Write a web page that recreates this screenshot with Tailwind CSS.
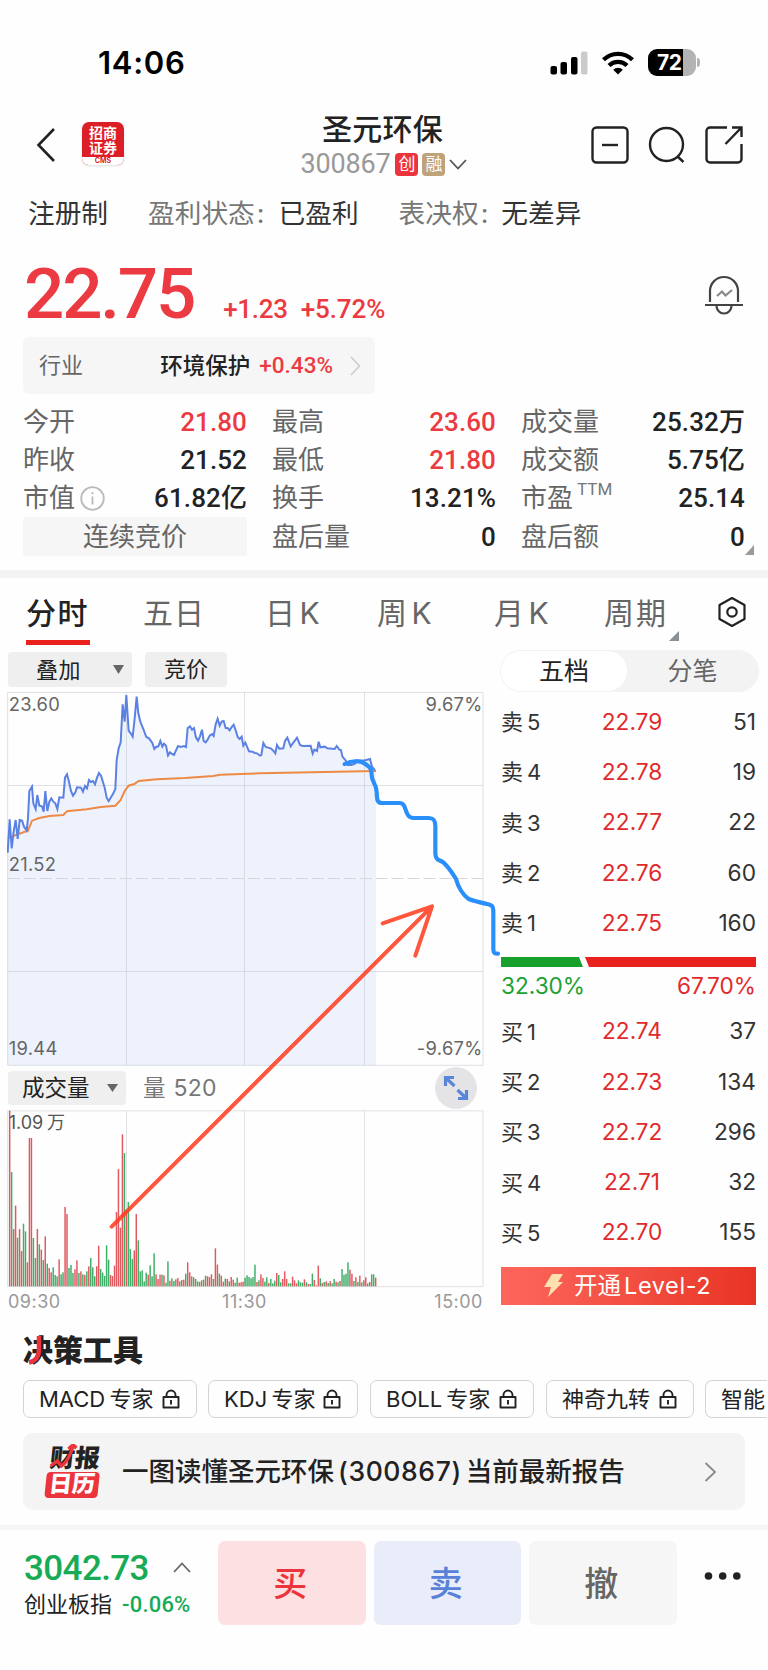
<!DOCTYPE html>
<html lang="zh-CN">
<head>
    <meta charset="UTF-8" />
    <meta name="viewport" content="width=device-width, initial-scale=1.0"/>
    <title>圣元环保 300867</title>
    <script src="https://cdn.jsdelivr.net/npm/@tailwindcss/browser@4"></script>
</head>
<body class="w-[768px] h-[1670px] overflow-hidden bg-[#fefefe] text-[#222] font-['Inter','Noto_Sans_CJK_SC',sans-serif] whitespace-nowrap">

<!-- Status bar -->
<div class="h-[100px] pt-[25px] pl-[98px] pr-[68px] flex items-center justify-between text-black">
    <span class="text-[31px] font-semibold leading-none tracking-[0.7px]">14:06</span>
    <div class="flex items-center gap-[14px]">
        <svg class="w-[38px] h-[24px]" viewBox="0 0 38 24">
            <rect x="0.5" y="15" width="6.5" height="8.5" rx="2"/>
            <rect x="10.5" y="11" width="6.5" height="12.5" rx="2"/>
            <rect x="21" y="6" width="6.5" height="17.5" rx="2"/>
            <rect x="31" y="0.5" width="6.5" height="23" rx="2" fill="#cbcbcb"/>
        </svg>
        <svg class="w-[32px] h-[24px]" viewBox="0 0 32 24" fill="none" stroke="#000" stroke-width="4.2">
            <path d="M1.5 8.8a20.6 20.6 0 0 1 29 0"/>
            <path d="M7 14.5a12.8 12.8 0 0 1 18 0"/>
            <path d="M16 23.5l-4.8-4.8a6.8 6.8 0 0 1 9.6 0z" fill="#000" stroke="none"/>
        </svg>
        <div class="flex items-center gap-[1px]">
            <div class="w-[48px] h-[27px] rounded-[9px] bg-linear-to-r from-black from-72% to-[#b3b3b3] to-72% text-white text-[21px] font-bold leading-[27px] pl-[9px] tracking-[-0.5px]">72</div>
            <div class="w-[3px] h-[9px] rounded-r-full bg-[#b3b3b3]"></div>
        </div>
    </div>
</div>

<!-- Title bar -->
<header class="h-[90px] px-[25px] grid grid-cols-[250px_1fr_250px] items-center">
    <div class="flex items-center pl-[11px]">
        <svg class="w-[20px] h-[36px]" viewBox="0 0 20 36" fill="none" stroke="#222" stroke-width="2.6"><path d="M18 2L2.5 18 18 34"/></svg>
        <div class="ml-[26px] mb-[4px] w-[42px] h-[43px] rounded-[7px] bg-[#dc1f26] overflow-hidden shadow-sm flex flex-col text-white text-[14px] font-bold leading-[15px] text-center">
            <span class="pt-[3px]">招商</span>
            <span>证券</span>
            <span class="mt-auto h-[8px] bg-white text-[#dc1f26] text-[7px] leading-[7px]">CMS</span>
        </div>
    </div>
    <div class="text-center">
        <h1 class="text-[30px] leading-[32px] font-medium mt-[3px] ml-[-3px] tracking-[0.2px]">圣元环保</h1>
        <div class="flex items-center justify-center h-[32px] mt-[4px] text-[#999]">
            <span class="text-[27px] font-['Roboto'] tracking-[-0.2px]">300867</span>
            <span class="ml-[5px] w-[23px] h-[23px] rounded-[4px] bg-[#ec343d] text-white text-[17px] leading-[22px]">创</span>
            <span class="ml-[4px] w-[23px] h-[23px] rounded-[4px] bg-[#bfa27a] text-white text-[17px] leading-[22px]">融</span>
            <svg class="ml-[4px] w-[18px] h-[11px]" viewBox="0 0 18 11" fill="none" stroke="#555" stroke-width="1.8"><path d="M1 1l8 8.5L17 1"/></svg>
        </div>
    </div>
    <div class="flex items-center justify-end gap-[19px]">
        <svg class="w-[38px] h-[38px]" viewBox="0 0 38 38" fill="none" stroke="#222" stroke-width="2.4"><rect x="1.5" y="1.5" width="35" height="35" rx="4"/><path d="M11 19h16"/></svg>
        <svg class="w-[38px] h-[38px]" viewBox="0 0 38 38" fill="none" stroke="#222" stroke-width="2.4"><circle cx="18.5" cy="18.5" r="16.5"/><path d="M29.5 30.5l6 5.5"/></svg>
        <svg class="w-[38px] h-[38px]" viewBox="0 0 38 38" fill="none" stroke="#222" stroke-width="2.4"><path d="M22 1.5H5A3.5 3.5 0 0 0 1.5 5v28A3.5 3.5 0 0 0 5 36.500h28a3.500 3.500 0 0 0 3.500-3.500V18M27 1.500h9.500V11M36 2L20.500 18"/></svg>
    </div>
</header>

<!-- Listing info -->
<div class="h-[46px] pl-[28px] flex items-center text-[26.7px] leading-none text-[#333]">
    <span>注册制</span>
    <span class="ml-[40px] text-[#777]">盈利状态<span class="ml-[2px]">:</span></span><span class="ml-[14px]">已盈利</span>
    <span class="ml-[40px] text-[#777]">表决权<span class="ml-[2px]">:</span></span><span class="ml-[13px]">无差异</span>
</div>

<!-- Price -->
<div class="h-[101px] px-[24px] flex items-start justify-between">
    <div class="flex items-baseline font-['Roboto'] text-[#ec3a42] pt-[18px]">
        <span class="text-[71px] leading-[80px] font-medium tracking-[-2.2px]">22.75</span>
        <span class="ml-[29px] text-[26px] font-medium tracking-[-0.3px]">+1.23</span>
        <span class="ml-[13px] text-[26px] font-medium tracking-[-0.1px]">+5.72%</span>
    </div>
    <svg class="mt-[39px] mr-[0px] w-[40px] h-[40px]" viewBox="0 0 40 40" fill="none" stroke="#444" stroke-width="2.2">
        <path d="M6 27V16a14 14 0 0 1 28 0v11M1 30h38M12.500 31a7.500 7.500 0 0 0 15 0"/>
        <path d="M13 21l5-4.500 3.500 4L28 15" stroke="#888"/>
    </svg>
</div>

<div class="ml-[23px] w-[352px] h-[57px] rounded-[6px] bg-[#f6f6f6] flex items-center pl-[16px] pr-[14px]">
    <span class="text-[22px] text-[#666]">行业</span>
    <span class="ml-auto text-[22.5px] font-medium">环境保护</span>
    <span class="ml-[9px] text-[22.500px] text-[#ec3a42] font-['Roboto'] font-medium">+0.43%</span>
    <svg class="ml-[17px] w-[11px] h-[20px]" viewBox="0 0 11 20" fill="none" stroke="#ccc" stroke-width="1.6"><path d="M1 1l8.500 9L1 19"/></svg>
</div>

<!-- Quote table -->
<div class="relative h-[176px] pt-[8.5px] px-[23px]">
    <div id="stats" class="grid grid-cols-[224px_224px_224px] gap-x-[25px] auto-rows-[38.300px] text-[26px] leading-none"></div>
    <svg class="absolute left-[745px] top-[151px] w-[9px] h-[10px]" viewBox="0 0 9 10"><path d="M9 0v10H0z" fill="#999"/></svg>
</div>

<div class="h-[8px] bg-[#f3f3f3]"></div>

<!-- Period tabs -->
<nav class="h-[67px] pl-[26px] grid grid-cols-[117px_122px_112px_117px_110px_113px_30px] text-[30px] leading-[70px] text-[#666] [word-spacing:-4px]">
    <span class="w-[64px] h-[67px] border-b-[5px] border-[#e8211c] text-[#222] font-medium tracking-[1.500px]">分时</span>
    <span class="tracking-[1px]">五日</span>
    <span>日 K</span>
    <span>周 K</span>
    <span>月 K</span>
    <span class="relative tracking-[2px]">周期
        <svg class="absolute left-[65px] top-[53px] w-[10px] h-[10px]" viewBox="0 0 10 10"><path d="M10 0v10H0z" fill="#8a9095"/></svg>
    </span>
    <svg class="mt-[18px] w-[30px] h-[32px]" viewBox="0 0 30 32" fill="none" stroke="#222" stroke-width="2.200"><path d="M15 2l12.500 7v14L15 30 2.500 23V9z" stroke-linejoin="round"/><circle cx="15" cy="16" r="4.700"/></svg>
</nav>

<main class="relative flex h-[667px]">
    <section class="w-[493px] pl-[7px] pt-[7px]">
        <div class="flex gap-[13px] text-[22px] text-[#222] leading-[34px]">
            <div class="ml-[1px] w-[124px] h-[35px] rounded-[4px] bg-[#efefef] flex items-center pl-[28px] tracking-[0.5px]">叠加
                <svg class="ml-[32px] w-[11px] h-[9px]" viewBox="0 0 11 9"><path d="M0 0h11L5.500 9z" fill="#666"/></svg>
            </div>
            <div class="w-[82px] h-[35px] rounded-[4px] bg-[#efefef] text-center">竞价</div>
        </div>
        <!-- Intraday chart -->
        <svg class="mt-[5px] w-[477px] h-[374px] block" viewBox="21 21 1431 1122" fill="none">
            <path id="area" fill="#eef2fd"/>
            <path d="M23 22.500H1449V1141H23zM379.500 22V1141M733.500 22V1141M1093.500 22V1141M23 301.500H1449M23 859.500H1449" stroke="#c4c8d0" stroke-opacity=".55" stroke-width="3"/>
            <path d="M23 580.500H1449" stroke="#d5d7dc" stroke-width="3" stroke-dasharray="36 12"/>
            <polyline points="23,460 47,450 84,437 96,407 118,399 148,393 190,390 201,379 260,373 303,366 346,362 362,345 374,318 386,302 403,297 416,288 470,283 555,279 640,273 660,269 780,265 1128,258" stroke="#ee8a45" stroke-width="6"/>
            <polyline id="price" stroke="#5b82e3" stroke-width="6" points="23,503 29,403 35,490 41,440 47,405 53,462 59,405 66,407 72,425 80,436 84,400 88,318 96,305 100,355 107,372 112,330 118,362 126,364 131,380 136,318 142,378 148,350 154,340 160,350 166,355 172,372 178,337 190,338 195,278 201,268 207,290 213,318 219,332 226,322 231,307 243,308 249,320 255,303 261,310 267,285 273,291 279,288 285,298 291,278 297,264 303,272 314,308 320,338 326,348 332,338 340,325 346,312 350,225 356,190 362,172 368,58 374,110 379,30 386,137 392,145 398,155 404,100 410,35 415,85 421,110 430,132 439,156 447,160 457,174 463,192 468,186 475,184 481,168 487,185 492,176 498,182 504,211 510,202 516,207 522,210 528,196 534,183 542,186 552,183 558,186 563,130 570,124 576,134 582,129 588,158 594,167 600,154 606,134 611,168 617,172 623,164 629,152 636,147 641,153 647,118 653,101 659,122 665,110 671,108 677,129 683,129 689,136 695,126 701,119 707,136 713,156 719,162 725,155 730,182 736,173 747,199 757,200 765,204 771,205 780,212 784,210 790,174 797,186 812,190 820,197 826,205 831,180 838,191 850,190 855,168 862,158 872,184 880,173 891,158 900,180 908,183 932,182 938,206 943,194 951,198 956,170 961,187 974,185 982,190 1004,192 1010,183 1018,194 1023,195 1027,214 1038,228 1042,240 1055,240 1065,236 1072,228 1095,226 1110,222 1116,245 1125,256"/>
            <g fill="#666" font-size="55" font-family="Inter" letter-spacing="1">
                <text x="26" y="77">23.60</text>
                <text x="26" y="558">21.52</text>
                <text x="26" y="1109">19.44</text>
                <text x="1448" y="77" text-anchor="end">9.67%</text>
                <text x="1448" y="1109" text-anchor="end">-9.67%</text>
            </g>
        </svg>
        <div class="h-[44px] flex items-center text-[22.500px] leading-none">
            <div class="ml-[1px] w-[118px] h-[34px] rounded-[4px] bg-[#efefef] flex items-center pl-[14px]">成交量
                <svg class="ml-[17px] w-[11px] h-[8px]" viewBox="0 0 11 8"><path d="M0 0h11L5.500 8z" fill="#666"/></svg>
            </div>
            <span class="ml-[17px] text-[#777]">量</span><span class="ml-[8px] text-[23px] text-[#777] tracking-[0.3px]">520</span>
            <div class="ml-auto mr-[16px] w-[42px] h-[42px] rounded-full bg-[#e4e4e6] flex items-center justify-center">
                <svg class="w-[26px] h-[26px]" viewBox="0 0 26 26" fill="none" stroke="#5b86d8" stroke-width="3.200"><path d="M2.500 11V2.500H11M3 3l8.500 8M23.500 15v8.500H15M23 23l-8.500-8"/></svg>
            </div>
        </div>
        <!-- Volume chart -->
        <svg class="w-[477px] h-[178px] block" viewBox="21 150 1431 534" fill="none">
            <path d="M23 152.500H1449V680H23zM379.500 152V680M733.500 152V680M1093.500 152V680" stroke="#e0e1e4" stroke-width="3"/>
            <g id="bars"></g>
            <text x="26" y="208" fill="#555" font-size="54" font-family="Inter, 'Noto Sans CJK SC'">1.09<tspan dx="11">万</tspan></text>
        </svg>
        <div class="w-[477px] pl-[1px] pr-[1px] h-[28px] flex justify-between text-[18px] leading-[27px] text-[#999] tracking-[0.5px]">
            <span>09:30</span><span class="ml-[-6px]">11:30</span><span>15:00</span>
        </div>
    </section>

    <!-- Order book -->
    <section class="w-[275px] pl-[8px] pr-[12px] pt-[5px]">
        <div class="ml-[-1px] mr-[-3px] h-[42px] rounded-full bg-[#f3f3f3] p-[1px] flex text-[25px] leading-[40px] text-center">
            <span class="w-[126px] rounded-full bg-white">五档</span>
            <span class="flex-1 text-[#666]">分笔</span>
        </div>
        <div id="asks" class="pt-[5px]"></div>
        <svg class="mt-[9px] w-[255px] h-[10px] block" viewBox="0 0 255 10"><path d="M0 0h78l4 10H0z" fill="#17a02b"/><path d="M84 0h171v10H88z" fill="#e8211f"/></svg>
        <div class="h-[38px] flex justify-between items-center text-[22.600px] leading-none">
            <span class="text-[#1ca133]">32.30%</span><span class="text-[#e12a2c]">67.70%</span>
        </div>
        <div id="bids" class="pt-px"></div>
        <button class="mt-[9px] w-[255px] h-[38px] flex items-center pl-[42px] bg-linear-to-r from-[#fd665c] to-[#e83323] text-white text-[23.500px] leading-none">
            <svg class="w-[21px] h-[23px]" viewBox="0 0 21 23"><path d="M9 0h11l-5 8h5L5 23l3-10H1z" fill="#ffe1b0"/></svg>
            <span class="ml-[10px]">开通<span class="ml-[3px] tracking-[0.600px]">Level-2</span></span>
        </button>
    </section>

    <!-- Hand-drawn marks -->
    <svg class="absolute left-0 top-[40px] w-[510px] h-[605px] pointer-events-none" viewBox="0 0 1530 1815" fill="none" stroke-linecap="round" stroke-linejoin="round">
        <path d="M1034 237C1056 226 1080 226 1094 236C1108 244 1115 250 1115 268C1114 294 1130 294 1130 322C1131 346 1132 354 1146 354H1200C1222 354 1212 399 1240 399H1286C1300 399 1306 404 1306 424V505C1306 528 1322 524 1332 534C1346 548 1356 562 1368 582C1374 606 1390 632 1406 642C1426 650 1448 654 1462 657C1476 661 1480 662 1480 682V790C1480 806 1484 806 1494 806" stroke="#2a8ffb" stroke-width="12.500"/>
        <path d="M335 1625L1296 664M1148 715L1296 664L1246 812" stroke="#ff3a1c" stroke-opacity=".85" stroke-width="12"/>
    </svg>
</main>

<!-- Tools -->
<section class="h-[213px] px-[23px] pt-[19px]">
    <h2 class="relative text-[30px] leading-[38px] font-black text-[#222]">决策工具
        <svg class="absolute left-[5px] top-[5px] w-[14px] h-[29px]" viewBox="0 0 14 29" fill="none" stroke="#ec343d" stroke-width="4.500"><path d="M11 0V13C11 20 8 25 1 26.500"/></svg>
    </h2>
    <div class="mt-[11px] flex text-[22px] leading-none [&>div]:h-[38px] [&>div]:shrink-0 [&>div]:rounded-[7px] [&>div]:border [&>div]:border-[#d4d4d4] [&>div]:flex [&>div]:items-center [&>div]:pl-[15px]">
        <div class="w-[174px]"><span class="w-[123px] [word-spacing:-2px]">MACD 专家</span><svg class="lock w-[18px] h-[20px]" viewBox="0 0 18 20"></svg></div>
        <div class="ml-[11px] w-[150px]"><span class="w-[99px] [word-spacing:-2px]">KDJ 专家</span><svg class="lock w-[18px] h-[20px]" viewBox="0 0 18 20"></svg></div>
        <div class="ml-[12px] w-[164px]"><span class="w-[113px] [word-spacing:-2px]">BOLL 专家</span><svg class="lock w-[18px] h-[20px]" viewBox="0 0 18 20"></svg></div>
        <div class="ml-[12px] w-[148px]"><span class="w-[97px]">神奇九转</span><svg class="lock w-[18px] h-[20px]" viewBox="0 0 18 20"></svg></div>
        <div class="ml-[11px] w-[62px] rounded-r-none! border-r-0!">智能</div>
    </div>
    <div class="mt-[15px] h-[77px] rounded-[10px] bg-[#f4f4f4] flex items-center pl-[24px] pr-[28px]">
        <div class="relative w-[53px] -skew-x-6 font-black text-center leading-none">
            <div class="text-[25px] leading-[26px]">财报</div>
            <div class="mt-[1px] h-[26px] rounded-[4px] bg-[#ec343d] text-white text-[23px] leading-[25px]">日历</div>
            <svg class="absolute left-[2px] top-[-1px] w-[26px] h-[25px]" viewBox="0 0 26 25" fill="none" stroke="#ec343d" stroke-width="3.500"><path d="M1 22l6-5 5 5C18 17 20 10 21 3M17 5l4-4 4 3"/></svg>
        </div>
        <span class="ml-[22px] text-[26.500px] font-medium [word-spacing:-3px]">一图读懂圣元环保 <span class="tracking-[0.600px]">(300867)</span> 当前最新报告</span>
        <svg class="ml-auto w-[13px] h-[20px]" viewBox="0 0 13 20" fill="none" stroke="#888" stroke-width="1.800"><path d="M1.500 1l9.500 9-9.500 9"/></svg>
    </div>
</section>

<div class="h-[5px] bg-[#f5f5f5]"></div>

<!-- Trade bar -->
<footer class="h-[140px] pt-[11px] pl-[24px] flex">
    <div class="w-[194px] pt-[7px]">
        <div class="flex h-[42px] items-center">
            <span class="w-[125px] text-[35px] text-[#17ab55] font-['Roboto'] font-medium tracking-[-0.600px]">3042.73</span>
            <svg class="ml-[24px] mb-[4px] w-[18px] h-[11px]" viewBox="0 0 18 11" fill="none" stroke="#666" stroke-width="1.800"><path d="M1 10l8-8.500L17 10"/></svg>
        </div>
        <div class="flex items-center h-[28px] text-[22px]">
            <span>创业板指</span>
            <span class="ml-[10px] text-[#17ab55] font-['Roboto'] font-medium tracking-[0.200px]">-0.06%</span>
        </div>
    </div>
    <div class="flex gap-[8px] text-[34px] font-medium text-center leading-[86px] [&>div]:pr-[3px]">
        <div class="w-[147.500px] h-[84px] rounded-[7px] bg-[#fde0e1] text-[#ec343d]">买</div>
        <div class="w-[147.500px] h-[84px] rounded-[7px] bg-[#e8edf9] text-[#5880d8]">卖</div>
        <div class="w-[147.500px] h-[84px] rounded-[7px] bg-[#f6f6f6] text-[#666]">撤</div>
    </div>
    <svg class="ml-[27px] mt-[30px] w-[38px] h-[10px]" viewBox="0 0 38 10" fill="#222"><circle cx="4.500" cy="5" r="3.800"/><circle cx="18.700" cy="5" r="3.800"/><circle cx="32.800" cy="5" r="3.800"/></svg>
</footer>

<script>
    const stats = [
      ["今开", "21.80", true], ["最高", "23.60", true], ["成交量", "25.32万"],
      ["昨收", "21.52"], ["最低", "21.80", true], ["成交额", "5.75亿"],
      ["市值", "61.82亿"], ["换手", "13.21%"], ["市盈", "25.14"],
      ["连续竞价", null], ["盘后量", "0"], ["盘后额", "0"]
    ];
    const info = `<svg class="ml-[5px] w-[25px] h-[25px]" viewBox="0 0 25 25" fill="none" stroke="#bbb" stroke-width="1.8"><circle cx="12.5" cy="12.5" r="11.3"/><path d="M12.5 10.500v8M12.5 6v2.200"/></svg>`;
    document.getElementById("stats").innerHTML = stats.map(([label, value, up]) => {
      if (value === null) {
        return `<div class="bg-[#f6f6f6] rounded-[3px] flex items-center justify-center text-[#666]">${label}</div>`;
      }
      const extra = label === "市值" ? info : label === "市盈" ? `<sup class="text-[17px] text-[#777] font-['Roboto'] self-start top-0 mt-[2px] ml-[4px] leading-none">TTM</sup>` : "";
      return `<div class="flex items-center"><span class="text-[#666]">${label}</span>${extra}
        <span class="ml-auto font-['Roboto','Noto_Sans_CJK_SC'] font-medium tracking-[0.1px] ${up ? "text-[#ec3a42]" : "text-[#222]"}">${value}</span></div>`;
    }).join("");

    const row = ([label, price, size]) => `<div class="h-[50.3px] grid grid-cols-[1fr_70px_1fr] items-center text-[22.7px] leading-none text-[#333]">
        <span class="text-[22px]">${label.replace(" ", "<span class='inline-block w-[4px]'></span>")}</span><span class="text-center text-[#e12a2c] ml-[6px] mr-[-1px]">${price}</span><span class="text-right">${size}</span></div>`;
    document.getElementById("asks").innerHTML = [
      ["卖 5", "22.79", 51], ["卖 4", "22.78", 19], ["卖 3", "22.77", 22], ["卖 2", "22.76", 60], ["卖 1", "22.75", 160]
    ].map(row).join("");
    document.getElementById("bids").innerHTML = [
      ["买 1", "22.74", 37], ["买 2", "22.73", 134], ["买 3", "22.72", 296], ["买 4", "22.71", 32], ["买 5", "22.70", 155]
    ].map(row).join("");

    document.getElementById("area").setAttribute("d",
      "M" + document.getElementById("price").getAttribute("points") + " 1128,258 1128,1141 23,1141z");

    // per-minute volume: r = up, g = down
    const volume = `r527 g343 r172 r242 g146 r172 r106 g188 g165 r72 r445 r445 g145 g85 r172 g126 r110 g79 r150 g68
      r55 r42 g57 g34 g30 r81 g36 g42 r238 r217 g55 g64 g40 r51 r78 g40 r45 g36 r34 g45
      r60 g85 g57 g30 r60 r122 g52 g41 g31 g123 g80 r34 r31 r62 r223 r352 r176 r456 g400 r230
      g253 g112 g82 r108 r217 g138 g45 g48 g15 g41 r35 g63 g30 g99 r36 r22 r35 g35 r33 g11
      g75 r17 g24 g16 r21 r25 g15 r19 r20 g38 r72 r42 g30 r27 g22 g15 r13 g18 r20 g32
      r30 r28 r36 g22 r114 r65 g38 r32 r14 g23 r22 g15 r28 r20 g11 g26 r11 r12 r14 g26
      g33 g28 g24 g28 g65 r13 g18 r36 r25 g14 g27 r10 g22 g9 g17 r40 g34 g12 r22 r45
      r22 g9 g9 r29 r18 r9 g18 g12 g11 r21 g12 r7 g7 g38 r19 r3 r62 g24 r10 g13
      r15 g10 r16 g9 g22 r14 g12 r16 g52 g35 g38 g72 r50 r38 g16 r27 g13 r32 g12 r18
      r27 g9 r13 g36 g36 r26`.split(/\s+/);
    document.getElementById("bars").innerHTML = volume.map((v, i) => {
      const h = Number(v.slice(1));
      return `<rect x="${(26.8 + i * 5.935).toFixed(1)}" y="${679 - h}" width="4.4" height="${h}" fill="${v[0] === "r" ? "#e0595f" : "#3fae68"}"/>`;
    }).join("");

    document.querySelectorAll(".lock").forEach(el => {
      el.innerHTML = `<path d="M1.500 8h15v10.500h-15zM4.500 8V6a4.500 4.500 0 0 1 9 0v2M9 11v4.500" fill="none" stroke="#222" stroke-width="1.900" stroke-linejoin="round"/>`;
    });
</script>

</body>
</html>
